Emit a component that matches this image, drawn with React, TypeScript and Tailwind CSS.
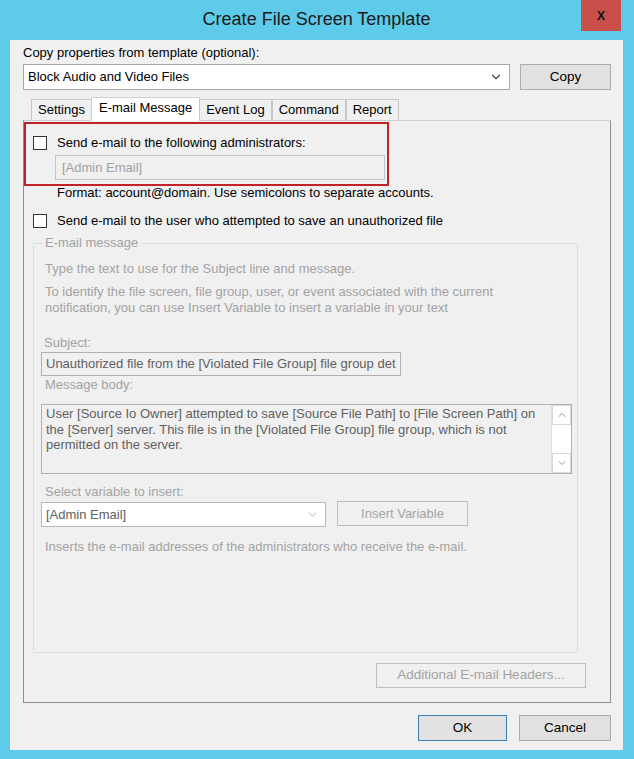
import { ChevronDown, ChevronUp } from 'lucide-react'

const font = { fontFamily: '"Liberation Sans", Arial, sans-serif' }

const Checkbox = () => (
  <span className="inline-block w-[14px] h-[14px] border border-[#333] bg-white shrink-0" />
)

const Button = ({ label, disabled, focused, className }: { label: string; disabled?: boolean; focused?: boolean; className: string }) => (
  <div
    className={`flex items-center justify-center text-[13.5px] border ${
      disabled
        ? 'border-[#bfbfbf] text-[#a3a3a3] bg-[#f0f0f0]'
        : focused
          ? 'border-[#3c7fb1] text-black bg-[#e1e1e1]'
          : 'border-[#adadad] text-black bg-[#e1e1e1]'
    } ${className}`}
  >
    {label}
  </div>
)

const tabs = ['Settings', 'E-mail Message', 'Event Log', 'Command', 'Report']

export default function App() {
  return (
    <div className="w-[634px] h-[759px] bg-[#5fcbea] flex flex-col pl-[10px] pr-[11px] pb-[9px]" style={font}>
      {/* Title bar */}
      <div className="h-[40px] relative flex items-center justify-center shrink-0">
        <span className="text-[18px] text-[#1a1a1a] pb-[1px]">Create File Screen Template</span>
        <div className="absolute right-[2px] top-0 w-[40px] h-[31px] bg-[#c9504a] flex items-center justify-center text-[#111] font-bold text-[12px] pt-[1px]">
          X
        </div>
      </div>

      {/* Client */}
      <div className="flex-1 bg-[#f0f0f0] pl-[13px] pr-[12px] pt-[6px] flex flex-col text-[13px]">
        <div className="h-[14px] leading-[14px] text-black">Copy properties from template (optional):</div>
        <div className="flex mt-[4px] h-[26px] gap-[10px]">
          <div className="w-[487px] h-full bg-white border border-[#a8a8a8] flex items-center pl-[4px] pr-[6px]">
            <span className="flex-1">Block Audio and Video Files</span>
            <ChevronDown size={14} strokeWidth={2} className="text-[#444]" />
          </div>
          <Button label="Copy" className="w-[91px] h-full" />
        </div>

        {/* Tabs */}
        <div className="flex items-end h-[23px] mt-[7px] pl-[8px] relative z-10">
          {tabs.map((t) =>
            t === 'E-mail Message' ? (
              <div key={t} className="h-[24px] -mb-[1px] px-[7px] bg-white border border-b-0 border-[#d0d0d0] leading-[20px] text-black -mx-[1px]">
                {t}
              </div>
            ) : (
              <div key={t} className="h-[21px] px-[6px] bg-[#f0f0f0] border border-b-0 border-[#c8c8c8] leading-[20px] text-black">
                {t}
              </div>
            ),
          )}
        </div>

        {/* Tab panel */}
        <div className="relative h-[583px] border border-[#8f8f8f] border-t-[#d0d0d0] bg-[#f0f0f0] flex flex-col pl-[9px] pr-[32px]">
          {/* highlight annotation */}
          <div className="absolute left-0 top-[1px] w-[365px] h-[64px] border-2 border-[#c22127]" />

          <div className="flex items-center gap-[10px] mt-[15px] h-[14px]">
            <Checkbox />
            <span>Send e-mail to the following administrators:</span>
          </div>
          <div className="ml-[22px] mt-[5px] w-[330px] h-[25px] border border-[#c4c4c4] bg-[#f0f0f0] text-[#a0a0a0] flex items-center pl-[6px]">
            [Admin Email]
          </div>
          <div className="ml-[24px] mt-[6px] h-[14px] leading-[14px]">
            Format: account@domain. Use semicolons to separate accounts.
          </div>
          <div className="flex items-center gap-[10px] mt-[14px] h-[14px]">
            <Checkbox />
            <span>Send e-mail to the user who attempted to save an unauthorized file</span>
          </div>

          {/* Group box */}
          <div className="relative mt-[15px] h-[410px] border border-[#dcdcdc] rounded-[2px] pl-[7px] pr-[7px] flex flex-col text-[#a3a3a3]">
            <span className="absolute -top-[8px] left-[8px] px-[3px] bg-[#f0f0f0] leading-[14px]">E-mail message</span>
            <div className="mt-[18px] ml-[4px] leading-[14px]">Type the text to use for the Subject line and message.</div>
            <div className="mt-[8px] ml-[4px] leading-[16px]">
              To identify the file screen, file group, user, or event associated with the current
              <br />
              notification, you can use Insert Variable to insert a variable in your text
            </div>
            <div className="mt-[20px] ml-[3px] leading-[14px]">Subject:</div>
            <div className="mt-[2px] w-[360px] h-[24px] border border-[#b0b0b0] text-[#606060] flex items-center pl-[4px] whitespace-nowrap overflow-hidden">
              Unauthorized file from the [Violated File Group] file group det
            </div>
            <div className="mt-[2px] ml-[4px] leading-[14px]">Message body:</div>
            <div className="mt-[12px] w-[531px] h-[70px] border border-[#b0b0b0] flex">
              <div className="flex-1 pl-[4px] pt-[1px] leading-[15.5px] text-[#606060]">
                User [Source Io Owner] attempted to save [Source File Path] to [File Screen Path] on
                <br />
                the [Server] server. This file is in the [Violated File Group] file group, which is not
                <br />
                permitted on the server.
              </div>
              <div className="w-[20px] flex flex-col border-l border-[#e2e2e2] bg-[#f0f0f0]">
                <div className="h-[20px] flex items-center justify-center bg-white border border-[#d8d8d8]">
                  <ChevronUp size={12} strokeWidth={1.5} className="text-[#777]" />
                </div>
                <div className="flex-1 bg-white" />
                <div className="h-[20px] flex items-center justify-center bg-white border border-[#d8d8d8]">
                  <ChevronDown size={12} strokeWidth={1.5} className="text-[#777]" />
                </div>
              </div>
            </div>
            <div className="mt-[11px] ml-[4px] leading-[14px]">Select variable to insert:</div>
            <div className="flex mt-[3px] gap-[11px] items-start">
              <div className="w-[285px] h-[25px] bg-white border border-[#b8b8b8] flex items-center pl-[4px] pr-[6px] text-[#606060]">
                <span className="flex-1">[Admin Email]</span>
                <ChevronDown size={13} strokeWidth={1.5} className="text-[#999]" />
              </div>
              <Button label="Insert Variable" disabled className="w-[131px] h-[25px] -mt-[1px] text-[13px]" />
            </div>
            <div className="mt-[13px] ml-[4px] leading-[14px]">Inserts the e-mail addresses of the administrators who receive the e-mail.</div>
          </div>

          <div className="flex justify-end mt-[10px] -mr-[8px]">
            <Button label="Additional E-mail Headers..." disabled className="w-[210px] h-[25px]" />
          </div>
        </div>

        {/* Footer */}
        <div className="flex justify-end gap-[12px] mt-[12px]">
          <Button label="OK" focused className="w-[89px] h-[26px]" />
          <Button label="Cancel" className="w-[92px] h-[26px]" />
        </div>
      </div>
    </div>
  )
}
